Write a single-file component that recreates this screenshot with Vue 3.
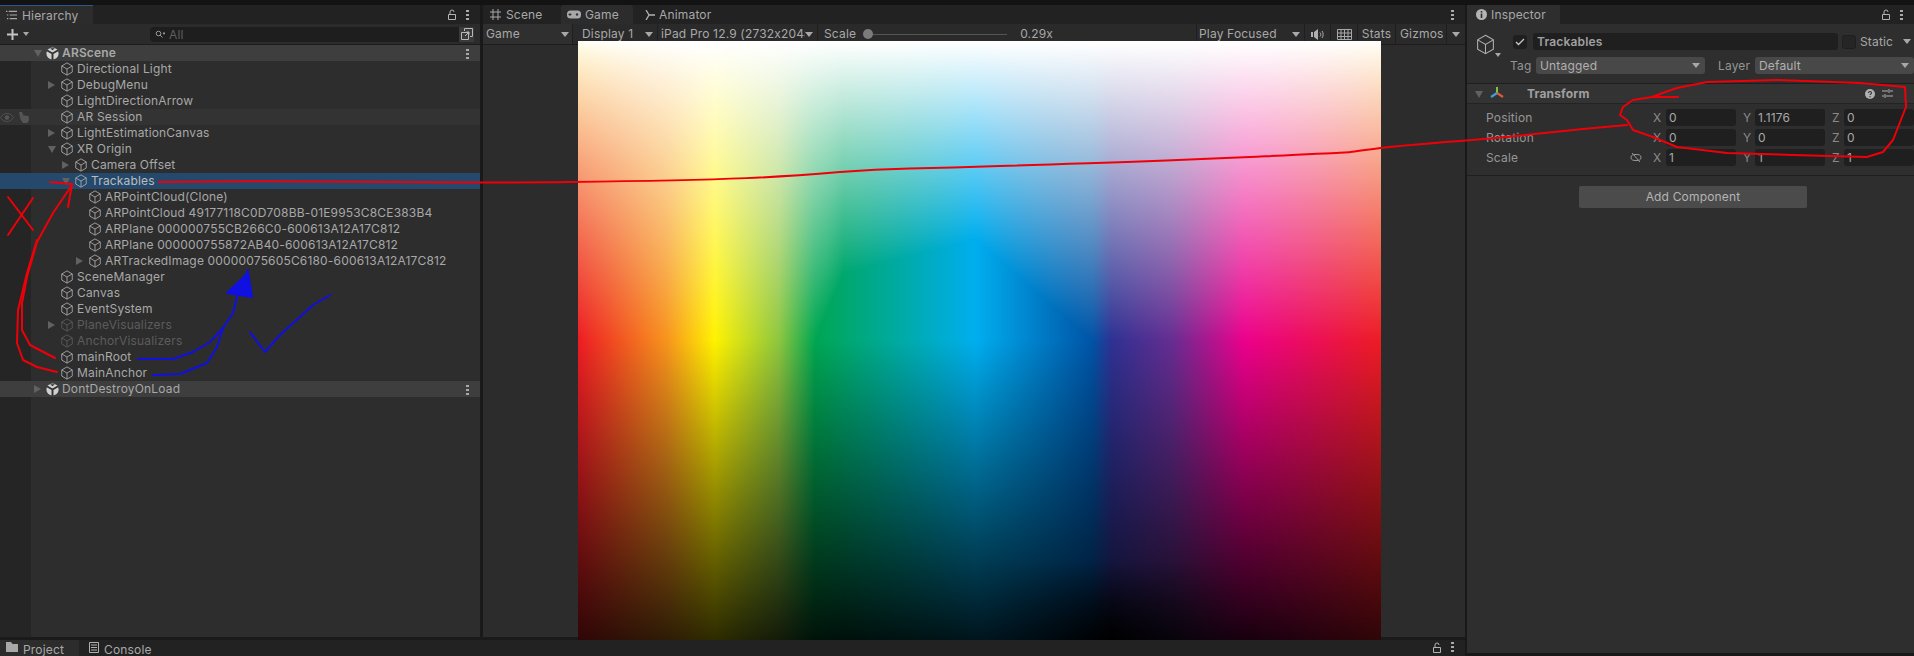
<script setup>
import { ref, onMounted } from 'vue'

const rows = [
  { name: 'ARScene', depth: 0, scene: true, open: true, bold: true },
  { name: 'Directional Light', depth: 1 },
  { name: 'DebugMenu', depth: 1, closed: true },
  { name: 'LightDirectionArrow', depth: 1 },
  { name: 'AR Session', depth: 1, hover: true },
  { name: 'LightEstimationCanvas', depth: 1, closed: true },
  { name: 'XR Origin', depth: 1, open: true },
  { name: 'Camera Offset', depth: 2, closed: true },
  { name: 'Trackables', depth: 2, open: true, selected: true },
  { name: 'ARPointCloud(Clone)', depth: 3 },
  { name: 'ARPointCloud 49177118C0D708BB-01E9953C8CE383B4', depth: 3 },
  { name: 'ARPlane 000000755CB266C0-600613A12A17C812', depth: 3 },
  { name: 'ARPlane 000000755872AB40-600613A12A17C812', depth: 3 },
  { name: 'ARTrackedImage 00000075605C6180-600613A12A17C812', depth: 3, closed: true },
  { name: 'SceneManager', depth: 1 },
  { name: 'Canvas', depth: 1 },
  { name: 'EventSystem', depth: 1 },
  { name: 'PlaneVisualizers', depth: 1, closed: true, off: true },
  { name: 'AnchorVisualizers', depth: 1, off: true },
  { name: 'mainRoot', depth: 1 },
  { name: 'MainAnchor', depth: 1 },
  { name: 'DontDestroyOnLoad', depth: 0, scene: true, closed: true },
]

const transformRows = [
  { label: 'Position', x: '0', y: '1.1176', z: '0' },
  { label: 'Rotation', x: '0', y: '0', z: '0' },
  { label: 'Scale', x: '1', y: '1', z: '1', link: true },
]

const cubePath = 'M8 1 14 4.500V11.500L8 15 2 11.500V4.500ZM2 4.500 8 8 14 4.500M8 8V15'

// the game view shows a hue / brightness test image
const hues = [
  [0, 237, 28, 36], [0.11, 247, 148, 29], [0.17, 255, 242, 0], [0.25, 141, 198, 63],
  [0.295, 0, 166, 81], [0.495, 0, 174, 239], [0.64, 0, 84, 166], [0.665, 46, 49, 146],
  [0.74, 102, 45, 145], [0.83, 236, 0, 140], [1, 237, 28, 36],
]
const peaks = [[0, 0.5], [0.295, 0.5], [0.33, 0.39], [0.495, 0.33], [0.64, 0.5], [1, 0.5]]
const floors = [[0, 0.2], [0.17, 0.18], [0.33, 0.1], [0.5, 0.12], [0.665, 0.22], [0.83, 0.1], [1, 0.2]]
const warmth = [[0, 1], [0.15, 0], [0.85, 0], [1, 0.7]]

const lookup = (table, x) => {
  for (let i = 1; i < table.length; i++) {
    if (x <= table[i][0]) {
      const a = table[i - 1]
      const b = table[i]
      const t = (x - a[0]) / (b[0] - a[0])
      return a.slice(1).map((v, n) => v + (b[n + 1] - v) * t)
    }
  }
  return table[table.length - 1].slice(1)
}

const game = ref(null)

onMounted(() => {
  const ctx = game.value.getContext('2d')
  const w = game.value.width
  const h = game.value.height
  const img = ctx.createImageData(w, h)
  for (let px = 0; px < w; px++) {
    const x = px / (w - 1)
    const c = lookup(hues, x)
    const peak = lookup(peaks, x)[0]
    const low = lookup(floors, x)[0]
    const warm = lookup(warmth, x)[0]
    for (let py = 0; py < h; py++) {
      const y = py / (h - 1)
      const i = (py * w + px) * 4
      let out
      if (y < peak) {
        const t = y / peak
        out = c.map((v) => 255 + (v - 255) * t)
        // the red ends lean orange above the middle line
        out[2] = 255 + (c[2] - 255) * Math.pow(t, 1 - 0.45 * warm)
      } else {
        let mid = y < 0.5 ? 1 : 1 - (1 - low) * ((y - 0.5) / 0.5)
        // black wedge under the blue column
        if (y > 0.87) {
          mid *= 1 - ((y - 0.87) / 0.13) * Math.max(0, 1 - Math.abs(x - 0.665) / 0.16)
        }
        out = c.map((v) => v * mid)
      }
      img.data[i] = out[0]
      img.data[i + 1] = out[1]
      img.data[i + 2] = out[2]
      img.data[i + 3] = 255
    }
  }
  ctx.putImageData(img, 0, 0)
})
</script>

<template>
  <div class="editor">
    <div class="topline"></div>
    <div class="main">
      <div class="leftside">
        <div class="panes">
          <section class="hierarchy">
            <div class="tabbar">
              <div class="tab tab-on tab-hier">
                <svg class="ic" width="11" height="12" viewBox="0 0 12 12"><path d="M0 2h1.500M3 2h9M1 6h1.500M4 6h8M1 10h1.500M4 10h8" stroke="#a8a8a8" stroke-width="1.200" fill="none"/></svg>
                <span>Hierarchy</span>
              </div>
              <div class="tabtools">
                <svg width="10" height="11" viewBox="0 0 10 11"><path d="M1.500 5.500h7v5h-7zM3 5.500V3a2 2 0 0 1 4 0" stroke="#b4b4b4" fill="none"/></svg>
                <span class="kebab"><i></i><i></i><i></i></span>
              </div>
            </div>
            <div class="hier-tools">
              <svg width="13" height="13" viewBox="0 0 13 13"><path d="M6.500 1v11M1 6.500h11" stroke="#c4c4c4" stroke-width="2"/></svg>
              <span class="caret small"></span>
              <div class="search">
                <svg width="10" height="9" viewBox="0 0 10 9"><circle cx="3.500" cy="3.500" r="2.300" stroke="#999" fill="none"/><path d="M5 5l2.500 2.500M8 3h2L9 4.300z" stroke="#999" fill="none"/></svg>
                <span>All</span>
              </div>
              <div class="search-btn">
                <svg width="12" height="12" viewBox="0 0 12 12"><path d="M.5 4.500h7v7h-7zM3.500 3V.5h8v8H9M4 8l4-4M5.500 4H8v2.500" stroke="#b8b8b8" fill="none"/></svg>
              </div>
            </div>
            <div class="tree">
              <div
                v-for="row in rows"
                :key="row.name"
                class="row"
                :class="{ scene: row.scene, hover: row.hover, selected: row.selected, off: row.off, bold: row.bold }"
                :style="{ paddingLeft: 32 + row.depth * 14 + 'px' }"
              >
                <span v-if="row.hover" class="gutter-icons">
                  <svg width="14" height="9" viewBox="0 0 14 9"><path d="M.5 4.500C3 1 5 .5 7 .5s4 .5 6.500 4C11 8 9 8.500 7 8.500S3 8 .5 4.500z" stroke="#555" fill="none"/><circle cx="7" cy="4.500" r="2.200" fill="#555"/></svg>
                  <svg width="12" height="11" viewBox="0 0 12 11"><path d="M1 0l3 0 1.500 3.500 5 .5.500 4-1.500 3H5L2.500 7.500z" fill="#555"/></svg>
                </span>
                <span class="arrow" :class="{ 'arrow-open': row.open, 'arrow-closed': row.closed }"></span>
                <svg v-if="row.scene" class="obj" width="13" height="13" viewBox="0 0 16 16">
                  <circle cx="8" cy="8" r="7.500" fill="#d0d0d0"/>
                  <path d="M8 8V16M8 8 1 4M8 8 15 4" stroke="#333" stroke-width="2.400" fill="none"/>
                  <path d="M5 1.500h6L8 4z" fill="#333"/>
                </svg>
                <svg v-else class="obj" width="14" height="16" viewBox="0 0 16 16"><path :d="cubePath" stroke="currentColor" fill="none"/></svg>
                <span class="rowname">{{ row.name }}</span>
                <span v-if="row.scene" class="kebab kebab-row"><i></i><i></i><i></i></span>
              </div>
            </div>
          </section>

          <section class="gamepane">
            <div class="tabbar">
              <div class="tab tab-scene">
                <svg class="ic" width="11" height="11" viewBox="0 0 11 11"><path d="M3 0v11M8 0v11M0 3h11M0 8h11" stroke="#a8a8a8" fill="none"/></svg>
                <span>Scene</span>
              </div>
              <div class="tab tab-on tab-game">
                <svg class="ic" width="14" height="9" viewBox="0 0 14 9"><rect width="14" height="8" y=".5" rx="3.500" fill="#a8a8a8"/><path d="M3 3v3M1.500 4.500h3" stroke="#333"/><circle cx="10" cy="4.500" r="1.200" fill="#333"/></svg>
                <span>Game</span>
              </div>
              <div class="tab tab-anim">
                <svg class="ic" width="11" height="10" viewBox="0 0 11 10"><path d="M1 0l3 5-3 5M4 5h6" stroke="#b4b4b4" stroke-width="1.300" fill="none"/></svg>
                <span>Animator</span>
              </div>
              <div class="tabtools tools-game"><span class="kebab"><i></i><i></i><i></i></span></div>
            </div>
            <div class="gametools">
              <div class="gt gt-game"><span>Game</span><b class="caret"></b></div>
              <div class="gt gt-display"><span>Display 1</span><b class="caret"></b></div>
              <div class="gt gt-ipad"><span class="clip">iPad Pro 12.9 (2732x2048)</span><b class="caret"></b></div>
              <div class="gt gt-scale">
                <span>Scale</span>
                <div class="slider"><i class="knob"></i></div>
                <span class="scale-val">0.29x</span>
              </div>
              <div class="gt gt-play"><span>Play Focused</span><b class="caret"></b></div>
              <div class="gt gt-audio">
                <svg width="13" height="11" viewBox="0 0 13 11"><path d="M0 3h2v5H0zM3 3l4-3v11L3 8z" fill="#b0b0b0"/><path d="M9 3.500c1 1 1 3 0 4M11 2c1.500 2 1.500 5 0 7" stroke="#b0b0b0" fill="none"/></svg>
              </div>
              <div class="gt gt-keys">
                <svg width="15" height="11" viewBox="0 0 15 11"><path d="M.5.5h14v10H.5zM.5 4h14M.5 7.500h14M4 .5v10M7.500.5v10M11 .5v10" stroke="#a8a8a8" fill="none"/></svg>
              </div>
              <div class="gt gt-stats"><span>Stats</span></div>
              <div class="gt gt-gizmos"><span>Gizmos</span></div>
              <div class="gt gt-end"><b class="caret"></b></div>
            </div>
            <div class="viewport">
              <canvas ref="game" class="gameview" width="803" height="599"></canvas>
            </div>
          </section>
        </div>
        <div class="bottomtabs">
          <div class="tab tab-on tab-project">
            <svg class="ic" width="12" height="10" viewBox="0 0 12 10"><path d="M0 0h5l1.500 2H12v8H0z" fill="#a8a8a8"/></svg>
            <span>Project</span>
          </div>
          <div class="tab tab-console">
            <svg class="ic" width="10" height="11" viewBox="0 0 10 11"><path d="M.5.5h9v10h-9zM2 3h6M2 5.500h6M2 8h6" stroke="#b0b0b0" fill="none"/></svg>
            <span>Console</span>
          </div>
          <div class="tabtools tools-bottom">
            <svg width="10" height="11" viewBox="0 0 10 11"><path d="M1.500 5.500h7v5h-7zM3 5.500V3a2 2 0 0 1 4 0" stroke="#b4b4b4" fill="none"/></svg>
            <span class="kebab"><i></i><i></i><i></i></span>
          </div>
        </div>
      </div>

      <section class="inspector">
        <div class="tabbar">
          <div class="tab tab-on tab-insp">
            <svg class="ic" width="11" height="11" viewBox="0 0 11 11"><circle cx="5.500" cy="5.500" r="5.500" fill="#b4b4b4"/><path d="M5.500 2v1.500M5.500 4.500V9" stroke="#2c2c2c" stroke-width="1.600"/></svg>
            <span>Inspector</span>
          </div>
          <div class="tabtools">
            <svg width="10" height="11" viewBox="0 0 10 11"><path d="M1.500 5.500h7v5h-7zM3 5.500V3a2 2 0 0 1 4 0" stroke="#b4b4b4" fill="none"/></svg>
            <span class="kebab"><i></i><i></i><i></i></span>
          </div>
        </div>
        <div class="objhead">
          <div class="bigcube">
            <svg width="21" height="23" viewBox="0 0 16 16"><path :d="cubePath" stroke="#b0b0b0" stroke-width=".8" fill="none"/></svg>
            <b class="caret small"></b>
          </div>
          <div class="objfields">
            <div class="objline">
              <div class="check"><svg width="10" height="8" viewBox="0 0 10 8"><path d="M1 4l2.500 2.500L9 1" stroke="#c8c8c8" stroke-width="1.300" fill="none"/></svg></div>
              <div class="namebox">Trackables</div>
              <div class="check check-static"></div>
              <span class="static">Static</span>
              <b class="caret"></b>
            </div>
            <div class="objline line-tag">
              <span class="tag-label">Tag</span>
              <div class="drop drop-tag"><span>Untagged</span><b class="caret"></b></div>
              <span class="layer-label">Layer</span>
              <div class="drop drop-layer"><span>Default</span><b class="caret"></b></div>
            </div>
          </div>
        </div>
        <div class="comp-head">
          <span class="arrow arrow-open"></span>
          <svg class="axis" width="14" height="13" viewBox="0 0 14 13"><path d="M7 0v6" stroke="#7fc24a" stroke-width="2"/><path d="M7 6 1 10" stroke="#3aa0d8" stroke-width="2.200"/><path d="M7 6l6 4" stroke="#d9593a" stroke-width="2.200"/></svg>
          <span class="comp-name">Transform</span>
          <svg class="helpic" width="10" height="10" viewBox="0 0 10 10"><circle cx="5" cy="5" r="5" fill="#b0b0b0"/><path d="M3.500 4c0-2 3-2 3 0 0 1-1.500 1-1.500 2M5 7v1.300" stroke="#333" stroke-width="1.100" fill="none"/></svg>
          <svg class="slidersic" width="11" height="11" viewBox="0 0 11 11"><path d="M0 3h6M8 3h3M7 1v4M0 8h2M4 8h7M3 6v4" stroke="#b0b0b0" fill="none"/></svg>
        </div>
        <div class="comp-body">
          <div v-for="t in transformRows" :key="t.label" class="vec">
            <span class="vec-label">{{ t.label }}</span>
            <svg v-if="t.link" class="linkic" width="12" height="9" viewBox="0 0 12 9"><path d="M1 4.500C1 2 3 1.500 6 1.500s5 .5 5 3-2 3-5 3-5-.5-5-3zM2 0l8 9" stroke="#999" fill="none"/></svg>
            <span class="axis-l">X</span><div class="num">{{ t.x }}</div>
            <span class="axis-l axis-next">Y</span><div class="num">{{ t.y }}</div>
            <span class="axis-l axis-next">Z</span><div class="num">{{ t.z }}</div>
          </div>
        </div>
        <div class="addwrap"><div class="addbtn">Add Component</div></div>
      </section>
    </div>

    <!-- marker scribbles drawn on top of the screenshot -->
    <svg class="scribble" width="1914" height="656" viewBox="0 0 1914 656" fill="none" stroke-linecap="round" stroke-linejoin="round">
      <g stroke="#ee0008" stroke-width="2">
        <path d="M159 182C300 179 400 184 570 182S780 177 840 172 884 170 1000 166 1119 163 1250 157 1339 153 1365 150 1381 147 1460 141 1543 132 1627 125 1733 117"/>
        <path d="M1678 97H1652Q1665 92 1677 88L1707 82 1777 80 1860 83 1905 87 1906 107 1893 140 1883 152 1867 157 1793 155 1727 153 1677 147 1653 137 1633 130 1627 120 1620 115 1623 107 1633 100 1652 97"/>
        <path d="M8 197 33 230M33 198 8 235"/>
        <path d="M50 182 72 184 68 207"/>
        <path d="M72 185 53 213 37 242 27 277 22 303 22 330 30 345 55 358"/>
        <path d="M57 372 37 367 23 360 17 343 18 310 27 273 37 240"/>
      </g>
      <g stroke="#1010e0" stroke-width="2">
        <path d="M138 359H173L193 352 210 342 223 328 233 313 238 293 248 270"/>
        <path d="M153 375 180 374 207 363 217 347 223 328"/>
        <path d="M227 293 248 273 252 297Z" fill="#1010e0"/>
        <path d="M250 332 265 352 280 335 313 305 330 295"/>
      </g>
    </svg>
  </div>
</template>

<style>
html, body { margin: 0; background: #1a1a1a; overflow: hidden; }
</style>

<style scoped>
.editor {
  position: relative;
  width: 1914px;
  height: 656px;
  overflow: hidden;
  background: #191919;
  font-family: Inter, "Liberation Sans", sans-serif;
  font-size: 12px;
  letter-spacing: 0.17px;
  color: #a8a8a8;
}
.topline { height: 5px; background: #131313; }
.main { display: flex; height: 651px; }
.leftside { width: 1465px; display: flex; flex-direction: column; }
.panes { display: flex; height: 632px; gap: 3px; }

/* tabs */
.tabbar { height: 19px; background: #222; display: flex; position: relative; }
.tab { display: flex; align-items: center; gap: 5px; height: 19px; box-sizing: border-box; line-height: 19px; }
.tab-on { background: #2c2c2c; }
.ic { flex: none; }
.tab-hier { width: 93px; padding-left: 6px; border-top: 1px solid #2a5a8a; }
.tab-scene { width: 78px; padding-left: 7px; }
.tab-game { width: 72px; padding-left: 6px; gap: 4px; border-radius: 3px 3px 0 0; }
.tab-anim { padding-left: 12px; gap: 3px; }
.tabtools { margin-left: auto; display: flex; align-items: center; gap: 9px; padding-right: 11px; }
.kebab { display: inline-flex; flex-direction: column; gap: 2px; width: 3px; }
.kebab i { display: block; width: 3px; height: 2px; background: #aaa; }

/* hierarchy */
.hierarchy { width: 480px; display: flex; flex-direction: column; background: #2d2d2d; }
.hier-tools { height: 20px; background: #2b2b2b; display: flex; align-items: center; padding-left: 6px; border-bottom: 1px solid #1c1c1c; }
.hier-tools .caret { margin-left: 4px; }
.search { margin-left: 121px; width: 309px; height: 15px; background: #1e1e1e; border-radius: 4px 0 0 4px; display: flex; align-items: center; gap: 4px; padding-left: 5px; box-sizing: border-box; color: #5e5e5e; }
.search-btn { width: 15px; height: 15px; background: #3a3a3a; display: flex; align-items: center; justify-content: center; }
.tree { flex: 1; background: linear-gradient(to right, #252525 31px, #2d2d2d 31px); }
.row { position: relative; height: 16px; display: flex; align-items: center; line-height: 16px; color: #a8a8a8; white-space: nowrap; }
.row .obj { flex: none; color: #a8a8a8; }
.rowname { margin-left: 3px; }
.scene { background: #3e3e3e; }
.bold .rowname { font-weight: 600; }
.hover { background: #333; }
.selected { background: #25496c; color: #bcbcbc; }
.off { color: #5c5c5c; }
.off .obj { color: #5c5c5c; }
.arrow { flex: none; width: 14px; height: 16px; display: block; position: relative; }
.arrow-open::before {
  content: ""; position: absolute; left: 2px; top: 5px;
  border-left: 4px solid transparent; border-right: 4px solid transparent; border-top: 7px solid #616161;
}
.arrow-closed::before {
  content: ""; position: absolute; left: 2px; top: 4px;
  border-top: 4px solid transparent; border-bottom: 4px solid transparent; border-left: 7px solid #616161;
}
.gutter-icons { position: absolute; left: 0; top: 3px; width: 30px; display: flex; gap: 4px; align-items: center; }
.kebab-row { position: absolute; right: 11px; top: 4px; }

/* game pane */
.gamepane { width: 982px; display: flex; flex-direction: column; background: #2c2c2c; }
.gametools { height: 20px; background: #2a2a2a; display: flex; align-items: center; border-bottom: 1px solid #1c1c1c; }
.gt { height: 20px; display: flex; align-items: center; border-right: 1px solid #1f1f1f; box-sizing: border-box; position: relative; line-height: 20px; flex: none; }
.gt .caret { position: absolute; top: 8px; }
.caret { display: block; width: 0; height: 0; border-left: 4px solid transparent; border-right: 4px solid transparent; border-top: 5px solid #a8a8a8; }
.caret.small { border-left-width: 3px; border-right-width: 3px; border-top-width: 4px; }
.gt-game { width: 90px; padding-left: 3px; background: #2f2f2f; }
.gt-game .caret { right: 3px; }
.gt-display { width: 85px; padding-left: 9px; }
.gt-display .caret { right: 4px; }
.gt-ipad { width: 160px; padding-left: 3px; }
.gt-ipad .clip { display: block; width: 144px; overflow: hidden; white-space: nowrap; }
.gt-ipad .caret { right: 4px; }
.gt-scale { width: 379px; padding-left: 6px; }
.slider { position: relative; width: 144px; height: 1px; background: #555; margin-left: 7px; }
.knob { position: absolute; left: 0; top: -5px; width: 10px; height: 10px; border-radius: 50%; background: #7b7b7b; }
.scale-val { margin-left: 13px; }
.gt-play { width: 108px; padding-left: 2px; }
.gt-play .caret { right: 4px; }
.gt-audio { width: 26px; justify-content: center; }
.gt-keys { width: 27px; justify-content: center; }
.gt-stats { width: 38px; justify-content: center; }
.gt-gizmos { width: 51px; padding-left: 4px; }
.gt-end { width: 18px; border-right: none; }
.gt-end .caret { right: 5px; }
.viewport { flex: 1; display: flex; background: #2c2c2c; padding-left: 95px; }
.gameview { display: block; width: 803px; height: 599px; margin-top: -4px; position: relative; }

/* bottom dock */
.bottomtabs { height: 19px; border-top: 3px solid #1a1a1a; background: #222; display: flex; overflow: hidden; box-sizing: border-box; }
.tab-project { width: 79px; flex: none; padding-left: 6px; gap: 5px; height: 19px; background: #2c2c2c; align-items: flex-start; }
.tab-project .ic { margin-top: 2px; }
.tab-console { padding-left: 10px; gap: 5px; align-items: flex-start; }
.tab-console .ic { margin-top: 2px; }
.tools-bottom { align-items: flex-start; padding-top: 2px; }

/* inspector */
.inspector { flex: none; width: 447px; margin-left: 2px; height: 648px; background: #2e2e2e; display: flex; flex-direction: column; overflow: hidden; }
.tab-insp { width: 93px; padding-left: 9px; gap: 4px; background: #2e2e2e; }
.objhead { height: 60px; display: flex; border-bottom: 1px solid #1e1e1e; box-sizing: border-box; padding-top: 9px; flex: none; }
.bigcube { width: 43px; flex: none; padding-left: 8px; box-sizing: border-box; position: relative; }
.bigcube .caret { position: absolute; left: 28px; top: 20px; }
.objfields { flex: 1; display: flex; flex-direction: column; gap: 7px; }
.objline { display: flex; align-items: center; height: 17px; position: relative; }
.check { flex: none; width: 14px; height: 14px; background: #1f1f1f; border-radius: 3px; margin-left: 3px; display: flex; align-items: center; justify-content: center; }
.namebox { flex: none; margin-left: 6px; width: 305px; height: 17px; line-height: 18px; padding-left: 4px; box-sizing: border-box; background: #1f1f1f; border-radius: 3px; font-weight: 600; color: #a0a0a0; }
.check-static { margin-left: 4px; background: #252525; border: 1px solid #1e1e1e; box-sizing: border-box; }
.static { margin-left: 4px; }
.objline > .caret { position: absolute; right: 3px; top: 6px; }
.tag-label { flex: none; width: 26px; color: #949494; line-height: 20px; }
.drop { flex: none; height: 17px; line-height: 17px; background: #484848; border-radius: 3px; position: relative; padding-left: 4px; box-sizing: border-box; color: #b0b0b0; }
.drop .caret { position: absolute; right: 5px; top: 6px; }
.drop-tag { width: 169px; }
.layer-label { flex: none; margin-left: 13px; width: 37px; color: #949494; line-height: 20px; }
.drop-layer { width: 159px; }
.comp-head { height: 20px; flex: none; background: #333; display: flex; align-items: center; padding-left: 6px; border-bottom: 1px solid #232323; box-sizing: border-box; position: relative; }
.comp-head .arrow { margin-right: 3px; }
.comp-name { margin-left: 23px; font-weight: 700; color: #a0a0a0; }
.helpic { position: absolute; left: 398px; top: 5px; }
.slidersic { position: absolute; left: 415px; top: 4px; }
.comp-body { padding: 5px 0 9px; display: flex; flex-direction: column; gap: 3px; border-bottom: 1px solid #1e1e1e; flex: none; }
.vec { height: 17px; display: flex; align-items: center; position: relative; }
.vec-label { flex: none; width: 186px; padding-left: 19px; box-sizing: border-box; color: #969696; }
.linkic { position: absolute; left: 163px; top: 4px; }
.axis-l { flex: none; width: 13px; color: #8a8a8a; }
.axis-next { width: 12px; }
.num { flex: none; width: 70px; height: 17px; line-height: 17px; padding-left: 3px; box-sizing: border-box; background: #1f1f1f; border-radius: 3px; margin-right: 7px; }
.addwrap { padding: 10px 0 0 112px; }
.addbtn { width: 228px; height: 22px; line-height: 22px; text-align: center; background: #4b4b4b; border-radius: 2px; color: #b4b4b4; }

/* annotation layer */
.scribble { position: absolute; left: 0; top: 0; pointer-events: none; }
</style>
